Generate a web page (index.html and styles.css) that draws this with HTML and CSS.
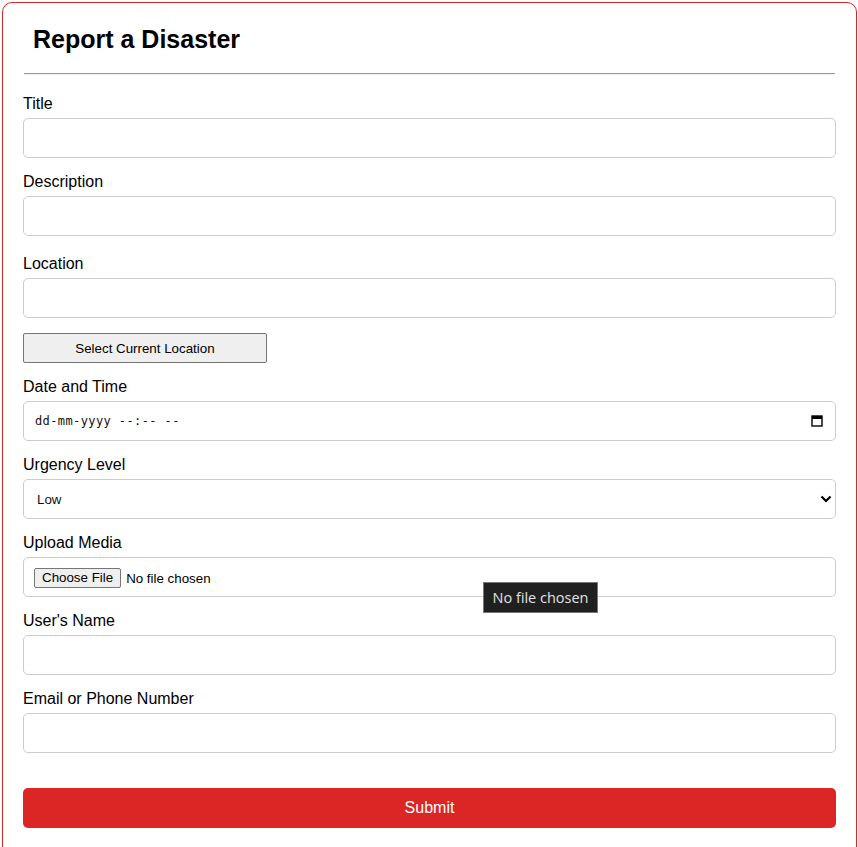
FILE: index.html
```html
<!DOCTYPE html>
<html lang="en">
<head>
<meta charset="utf-8">
<title>Report a Disaster</title>
<link rel="stylesheet" href="styles.css">
</head>
<body>
<div class="card">
  <h2 class="title">Report a Disaster</h2>
  <hr class="rule">
  <form class="form">
    <div class="group">
      <label class="label">Title</label>
      <input class="field" type="text">
    </div>
    <div class="group group-tall">
      <label class="label">Description</label>
      <input class="field" type="text">
    </div>
    <div class="group">
      <label class="label">Location</label>
      <input class="field" type="text">
      <button type="button" class="loc-btn">Select Current Location</button>
    </div>
    <div class="group">
      <label class="label">Date and Time</label>
      <div class="field fake date">
        <span class="date-text">dd-mm-yyyy --:-- --</span>
        <svg class="cal" width="12" height="12" viewBox="0 0 12 12"><rect x="1" y="1" width="10" height="10" fill="none" stroke="#000" stroke-width="1.4"/><rect x="1" y="1" width="10" height="3" fill="#000"/></svg>
      </div>
    </div>
    <div class="group">
      <label class="label">Urgency Level</label>
      <div class="field fake select">
        <span>Low</span>
        <svg class="chev" width="12" height="8" viewBox="0 0 12 8"><path d="M1.5 1.5 L6 6 L10.5 1.5" fill="none" stroke="#000" stroke-width="2.2"/></svg>
      </div>
    </div>
    <div class="group">
      <label class="label">Upload Media</label>
      <div class="field fake file">
        <span class="file-btn">Choose File</span>
        <span class="file-text">No file chosen</span>
        <div class="tooltip">No file chosen</div>
      </div>
    </div>
    <div class="group">
      <label class="label">User's Name</label>
      <input class="field" type="text">
    </div>
    <div class="group">
      <label class="label">Email or Phone Number</label>
      <input class="field" type="text">
    </div>
    <button type="button" class="submit">Submit</button>
  </form>
</div>
</body>
</html>
```
FILE: styles.css
```css
html, body {
  margin: 0;
  padding: 0;
  background: #fff;
}
body {
  padding: 2px 1px 2px 2px;
  font-family: "Liberation Sans", Arial, sans-serif;
  color: #000;
}
.card {
  border: 1px solid #dc2626;
  border-radius: 10px;
  padding: 20px;
  background: #fff;
  min-height: 900px;
}
.title {
  margin: 0;
  padding: 2px 10px;
  font-size: 25px;
  line-height: 28px;
  font-weight: bold;
}
.rule {
  margin: 18px 1px 0;
  border: 0;
  border-top: 1px solid #9a9a9a;
  border-bottom: 1px solid #eee;
}
.form {
  margin-top: 20px;
}
.group {
  margin-bottom: 15px;
}
.group-tall {
  margin-bottom: 19px;
}
.label {
  display: block;
  font-size: 16px;
  line-height: 18px;
  margin-bottom: 5px;
}
.field {
  display: block;
  box-sizing: border-box;
  width: 100%;
  height: 40px;
  border: 1px solid #ccc;
  border-radius: 5px;
  background: #fff;
  margin: 0;
  padding: 0 10px;
  font-family: "Liberation Sans", Arial, sans-serif;
  font-size: 13.33px;
}
.fake {
  display: flex;
  align-items: center;
}
.date {
  padding: 0 12px 0 11px;
  justify-content: space-between;
}
.date-text {
  font-family: "DejaVu Sans Mono", "Liberation Mono", monospace;
  font-size: 12px;
  letter-spacing: 0.4px;
  color: #111;
}
.cal {
  display: block;
}
.select {
  padding: 0 3px 0 13px;
  justify-content: space-between;
  color: #111;
}
.chev {
  display: block;
}
.file {
  position: relative;
  padding: 2px 10px 0;
  font-size: 13.33px;
}
.file-btn {
  display: inline-block;
  box-sizing: border-box;
  height: 20px;
  line-height: 18px;
  padding: 0 7px;
  background: #efefef;
  border: 1px solid #767676;
  border-radius: 2px;
  font-size: 13.33px;
  color: #000;
}
.file-text {
  margin-left: 5px;
  color: #000;
}
.tooltip {
  position: absolute;
  left: 459px;
  top: 24px;
  width: 115px;
  height: 31px;
  box-sizing: border-box;
  background: #202020;
  border: 1px solid #767676;
  color: #e2e2e2;
  font-family: "Open Sans", "Noto Sans", sans-serif;
  font-size: 14.5px;
  line-height: 29px;
  text-align: center;
  z-index: 2;
}
.loc-btn {
  display: block;
  box-sizing: border-box;
  width: 30%;
  height: 30px;
  margin-top: 15px;
  background: #efefef;
  border: 1px solid #767676;
  border-radius: 2px;
  font-family: "Liberation Sans", Arial, sans-serif;
  font-size: 13.33px;
  color: #000;
  padding: 0;
}
.submit {
  display: block;
  box-sizing: border-box;
  width: 100%;
  height: 40px;
  margin-top: 35px;
  background: #dc2626;
  color: #fff;
  border: 0;
  border-radius: 5px;
  font-family: "Liberation Sans", Arial, sans-serif;
  font-size: 16px;
  padding: 0;
}
```
